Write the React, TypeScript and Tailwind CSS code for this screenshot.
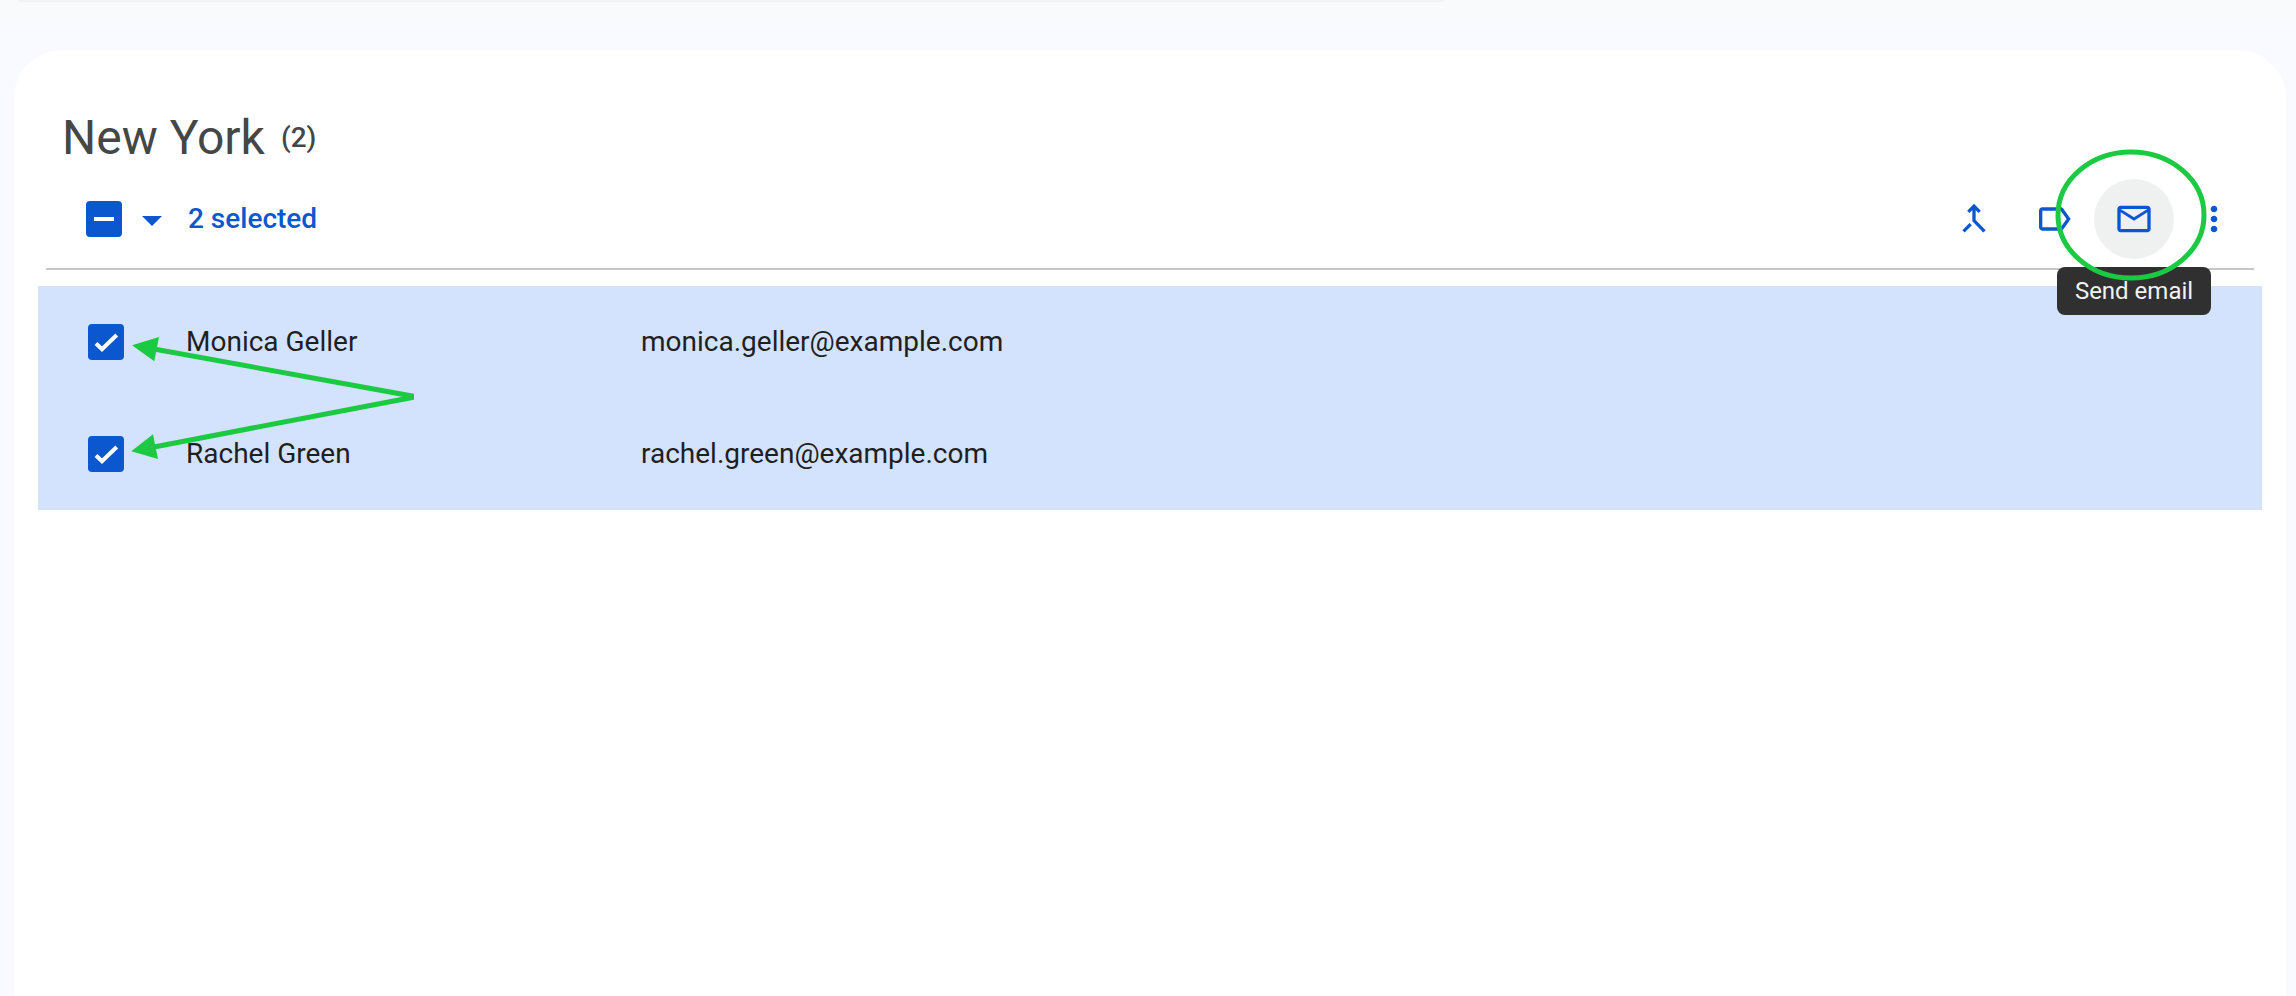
import React from "react";
import { MdMoreVert, MdOutlineLabel, MdOutlineMail } from "react-icons/md";

const contacts = [
  { id: "monica", name: "Monica Geller", email: "monica.geller@example.com" },
  { id: "rachel", name: "Rachel Green", email: "rachel.green@example.com" },
];

const MergeIcon = () => (
  <svg viewBox="0 0 24 24" className="size-10" fill="none" stroke="currentColor" strokeWidth="2">
    <path d="M12 4v9l6.3 6.4M5.7 19.4l4.3-4.3M8.6 7.7 12 4.3l3.4 3.4" />
  </svg>
);

const Checkbox = ({ id, label, partial }: { id: string; label: string; partial?: boolean }) => (
  <div className="grid size-9 shrink-0">
    <input
      id={id}
      type="checkbox"
      defaultChecked
      aria-label={label}
      className="col-start-1 row-start-1 size-9 appearance-none rounded bg-[#0b57d0]"
    />
    <svg
      viewBox="0 0 36 36"
      className="pointer-events-none col-start-1 row-start-1 size-9"
      fill="none"
      stroke="white"
      strokeWidth="4"
    >
      {partial ? <path d="M8 18h20" /> : <path d="M8 19.5l6 5.7L28.7 11" />}
    </svg>
  </div>
);

const IconButton = ({ label, children }: { label: string; children: React.ReactNode }) => (
  <button type="button" aria-label={label} className="grid size-20 place-items-center rounded-full">
    {children}
  </button>
);

const Toolbar = () => (
  <div className="mx-8 mt-1 flex h-[100px] items-center border-b-2 border-[#c7c7c7] pl-10 text-[#0b57d0]">
    <Checkbox id="all" label="Select all" partial />
    <button type="button" aria-label="Selection options" className="ml-5 grid h-9 w-5 place-items-center">
      <svg viewBox="0 0 20 10" className="mt-1 h-[10px] w-5" fill="currentColor">
        <path d="M0 0h20L10 10z" />
      </svg>
    </button>
    <span className="ml-[26px] text-[28px] font-medium">2 selected</span>
    <div className="ml-auto flex">
      <IconButton label="Merge">
        <MergeIcon />
      </IconButton>
      <IconButton label="Manage labels">
        <MdOutlineLabel className="size-10" />
      </IconButton>
      <div className="relative">
        <button
          type="button"
          aria-label="Send email"
          className="grid size-20 place-items-center rounded-full bg-[#eff1f1]"
        >
          <MdOutlineMail className="size-10" />
        </button>
        <div
          role="tooltip"
          className="absolute top-[88px] left-1/2 z-10 flex h-12 w-[154px] -translate-x-1/2 items-center justify-center rounded-lg bg-[#303030] text-2xl whitespace-nowrap text-[#f2f2f2]"
        >
          Send email
        </div>
        <svg
          viewBox="0 0 160 140"
          className="pointer-events-none absolute -top-[34px] -left-[43px] z-20 h-[140px] w-[160px] max-w-none"
        >
          <ellipse cx="80" cy="70" rx="73" ry="63" fill="none" stroke="#1bca42" strokeWidth="5" />
        </svg>
      </div>
      <IconButton label="More actions">
        <MdMoreVert className="size-10" />
      </IconButton>
    </div>
  </div>
);

const ContactTable = () => (
  <div className="relative mx-6 mt-4">
    <table className="w-full table-fixed bg-[#d3e3fd] text-left text-[28px] text-[#1f1f1f]">
      <colgroup>
        <col className="w-[148px]" />
        <col className="w-[455px]" />
        <col />
      </colgroup>
      <tbody>
        {contacts.map((contact) => (
          <tr key={contact.id} className="h-28">
            <td className="pl-[50px]">
              <Checkbox id={contact.id} label={contact.name} />
            </td>
            <td>
              <label htmlFor={contact.id}>{contact.name}</label>
            </td>
            <td>{contact.email}</td>
          </tr>
        ))}
      </tbody>
    </table>
    <svg
      viewBox="0 0 284 128"
      className="pointer-events-none absolute top-12 left-[92px] h-32 w-[284px]"
      fill="#1bca42"
    >
      <path d="M24 15 286 62.7 24 113" fill="none" stroke="#1bca42" strokeWidth="5" />
      <path d="M2 11.3 29 3l-4.7 24.3zM1.3 117.3 23 100.3l5 24.7z" />
    </svg>
  </div>
);

const App = () => {
  return (
    <div className="flex min-h-screen flex-col bg-linear-to-b from-[#f8fafb] to-[#f8faff] to-[32px] pr-[10px] pl-[14px] font-[Roboto,sans-serif]">
      <div className="mr-[37%] ml-1 h-[2px] rounded-b-lg bg-[#f2f3f4]" />
      <main className="mt-12 flex-1 rounded-t-[48px] bg-white pt-[60px]">
        <div className="flex items-center gap-4 pl-12 text-[#444746]">
          <h1 className="text-5xl leading-[56px]">New York</h1>
          <span className="text-[28px] leading-9 font-medium">(2)</span>
        </div>
        <Toolbar />
        <ContactTable />
      </main>
    </div>
  );
};

export default App;
